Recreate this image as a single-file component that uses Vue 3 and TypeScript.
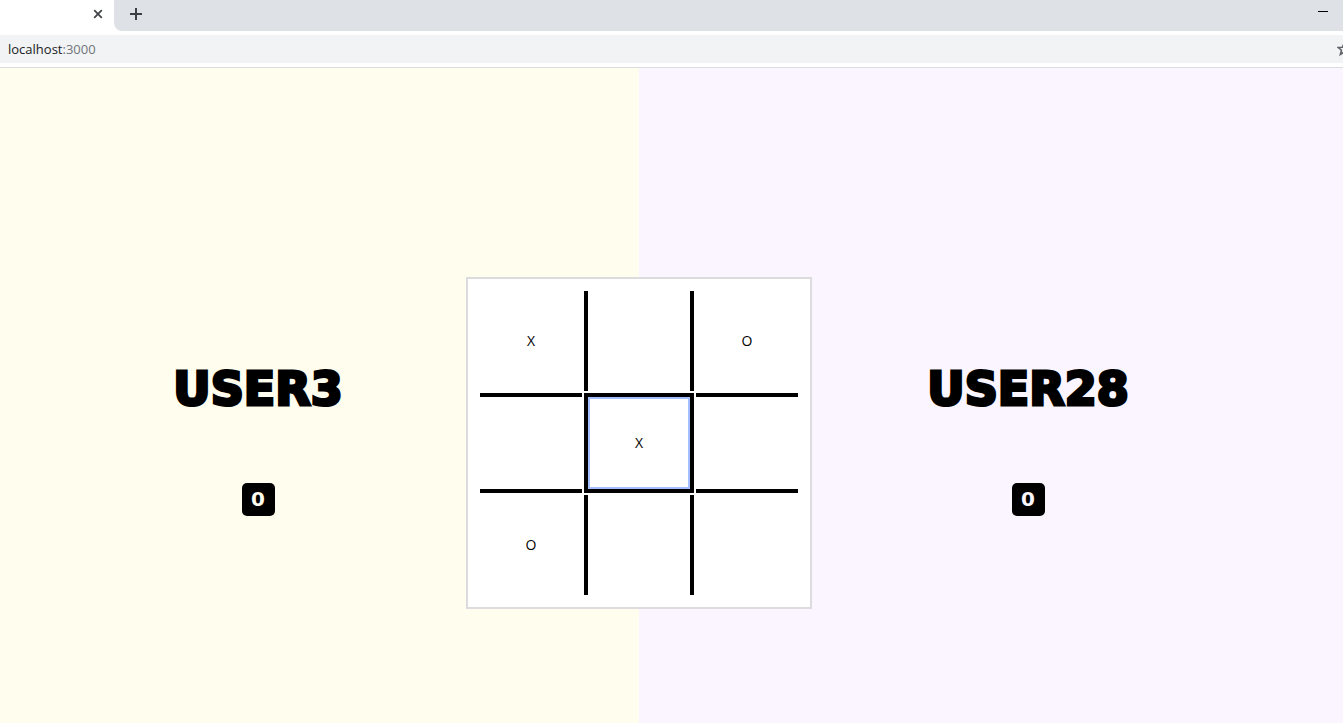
<script setup lang="ts">
import { ref } from 'vue'

interface Player {
  name: string
  score: number
  side: 'left' | 'right'
}

const players: Player[] = [
  { name: 'USER3', score: 0, side: 'left' },
  { name: 'USER28', score: 0, side: 'right' },
]

const board = ref<string[][]>([
  ['X', '', 'O'],
  ['', 'X', ''],
  ['O', '', ''],
])

const active = ref('1-1')

function play(row: number, col: number) {
  active.value = `${row}-${col}`
}
</script>

<template>
  <div class="window">
    <header class="chrome">
      <div class="tabs">
        <div class="tab">
          <button class="icon-button" aria-label="Close tab">
            <svg width="10" height="10" viewBox="0 0 10 10"><path d="M1.2 1.2 8.8 8.8M8.8 1.2 1.2 8.8" stroke="#3f4246" stroke-width="1.7" /></svg>
          </button>
        </div>
        <button class="icon-button new-tab" aria-label="New tab">
          <svg width="12" height="12" viewBox="0 0 12 12"><path d="M6 0V12M0 6H12" stroke="#3c4043" stroke-width="2" /></svg>
        </button>
        <button class="icon-button minimise" aria-label="Minimise">
          <svg width="10" height="1" viewBox="0 0 10 1"><path d="M0 0H10V1H0Z" fill="#000" /></svg>
        </button>
      </div>
      <div class="toolbar">
        <div class="address" role="textbox" aria-label="Address" tabindex="0">localhost<span class="port">:3000</span></div>
        <button class="icon-button star" aria-label="Bookmark">
          <svg width="14" height="14" viewBox="0 0 14 14"><path d="M7 1.3 8.6 5.2 12.8 5.5 9.6 8.2 10.6 12.4 7 10.1 3.4 12.4 4.4 8.2 1.2 5.5 5.4 5.2Z" fill="none" stroke="#5f6368" stroke-width="1.6" /></svg>
        </button>
      </div>
    </header>

    <main class="game">
      <section v-for="p in players" :key="p.name" class="player" :class="p.side">
        <h1 class="name">{{ p.name }}</h1>
        <p class="score">{{ p.score }}</p>
      </section>

      <div class="board">
        <table>
          <tbody>
            <tr v-for="(row, r) in board" :key="r">
              <td v-for="(mark, c) in row" :key="c" :class="{ column: c === 1, row: r === 1 }">
                <button
                  class="cell"
                  :class="{ active: active === `${r}-${c}` }"
                  :aria-label="`Row ${r + 1}, column ${c + 1}`"
                  @click="play(r, c)"
                >{{ mark }}</button>
              </td>
            </tr>
          </tbody>
        </table>
      </div>
    </main>
  </div>
</template>

<style>
body {
  margin: 0;
}
</style>

<style scoped>
.window {
  display: flex;
  flex-direction: column;
  min-height: 100vh;
  overflow: hidden;
  font-family: "Open Sans", "Noto Sans", sans-serif;
  color: #000;
}

.icon-button {
  display: flex;
  flex: none;
  padding: 0;
  border: 0;
  background: none;
}

.chrome {
  background: #fff;
  border-bottom: 1px solid #dadce0;
}

.tabs {
  display: flex;
  align-items: center;
  height: 31px;
  background: linear-gradient(to right, #fff 130px, #dee1e6 130px);
}

.tab {
  display: flex;
  align-items: center;
  justify-content: flex-end;
  box-sizing: border-box;
  width: 114px;
  height: 100%;
  padding: 0 11px 3px 0;
  background: #fff;
}

.new-tab {
  align-items: center;
  flex: 1;
  box-sizing: border-box;
  height: 100%;
  padding: 0 0 3px 16px;
  border-bottom-left-radius: 8px;
  background: #dee1e6;
}

.minimise {
  align-items: center;
  height: 100%;
  padding: 0 15px 8px 0;
}

.toolbar {
  display: flex;
  align-items: center;
  margin: 4px 0;
  background: #f1f3f4;
}

.address {
  flex: 1;
  padding-left: 8px;
  font-size: 13px;
  line-height: 28px;
  color: #202124;
}

.port {
  color: #70757a;
}

.star {
  margin-right: -8px;
}

.game {
  position: relative;
  display: grid;
  grid-template-columns: 639fr 704fr;
  flex: 1;
}

.player {
  --tint: #fffdee;
  display: flex;
  flex-direction: column;
  align-items: center;
  justify-content: center;
  gap: 64px;
  padding-top: 84px;
  background: var(--tint);
  font-family: "DejaVu Sans", sans-serif;
  font-weight: 700;
}

.left {
  padding-right: 123px;
}

.right {
  --tint: #faf5ff;
  padding-left: 74px;
}

.name,
.score {
  margin: 0;
  font-weight: inherit;
}

.name {
  font-size: 46px;
  line-height: 60px;
  -webkit-text-stroke: 3px #000;
}

.score {
  width: 33px;
  border-radius: 5px;
  background: #000;
  color: var(--tint);
  font-size: 20px;
  line-height: 33px;
  text-align: center;
}

.board {
  position: absolute;
  top: calc(50% + 47px);
  left: calc(100% * 639 / 1343);
  padding: 10px;
  border: 2px solid #dcdcde;
  background: #fff;
  transform: translate(-50%, -50%);
}

table {
  border-spacing: 2px;
}

td {
  box-sizing: border-box;
  height: 100px;
  padding: 0;
  border: 0 solid #000;
}

.column {
  border-right-width: 4px;
  border-left-width: 4px;
}

.row {
  border-top-width: 4px;
  border-bottom-width: 4px;
}

.cell {
  display: block;
  width: 102px;
  height: 92px;
  padding: 0;
  border: 0;
  background: #fff;
  color: #000;
  font-family: inherit;
  font-size: 14px;
}

.active {
  outline: 2px solid #a4bfff;
  outline-offset: -2px;
}
</style>
